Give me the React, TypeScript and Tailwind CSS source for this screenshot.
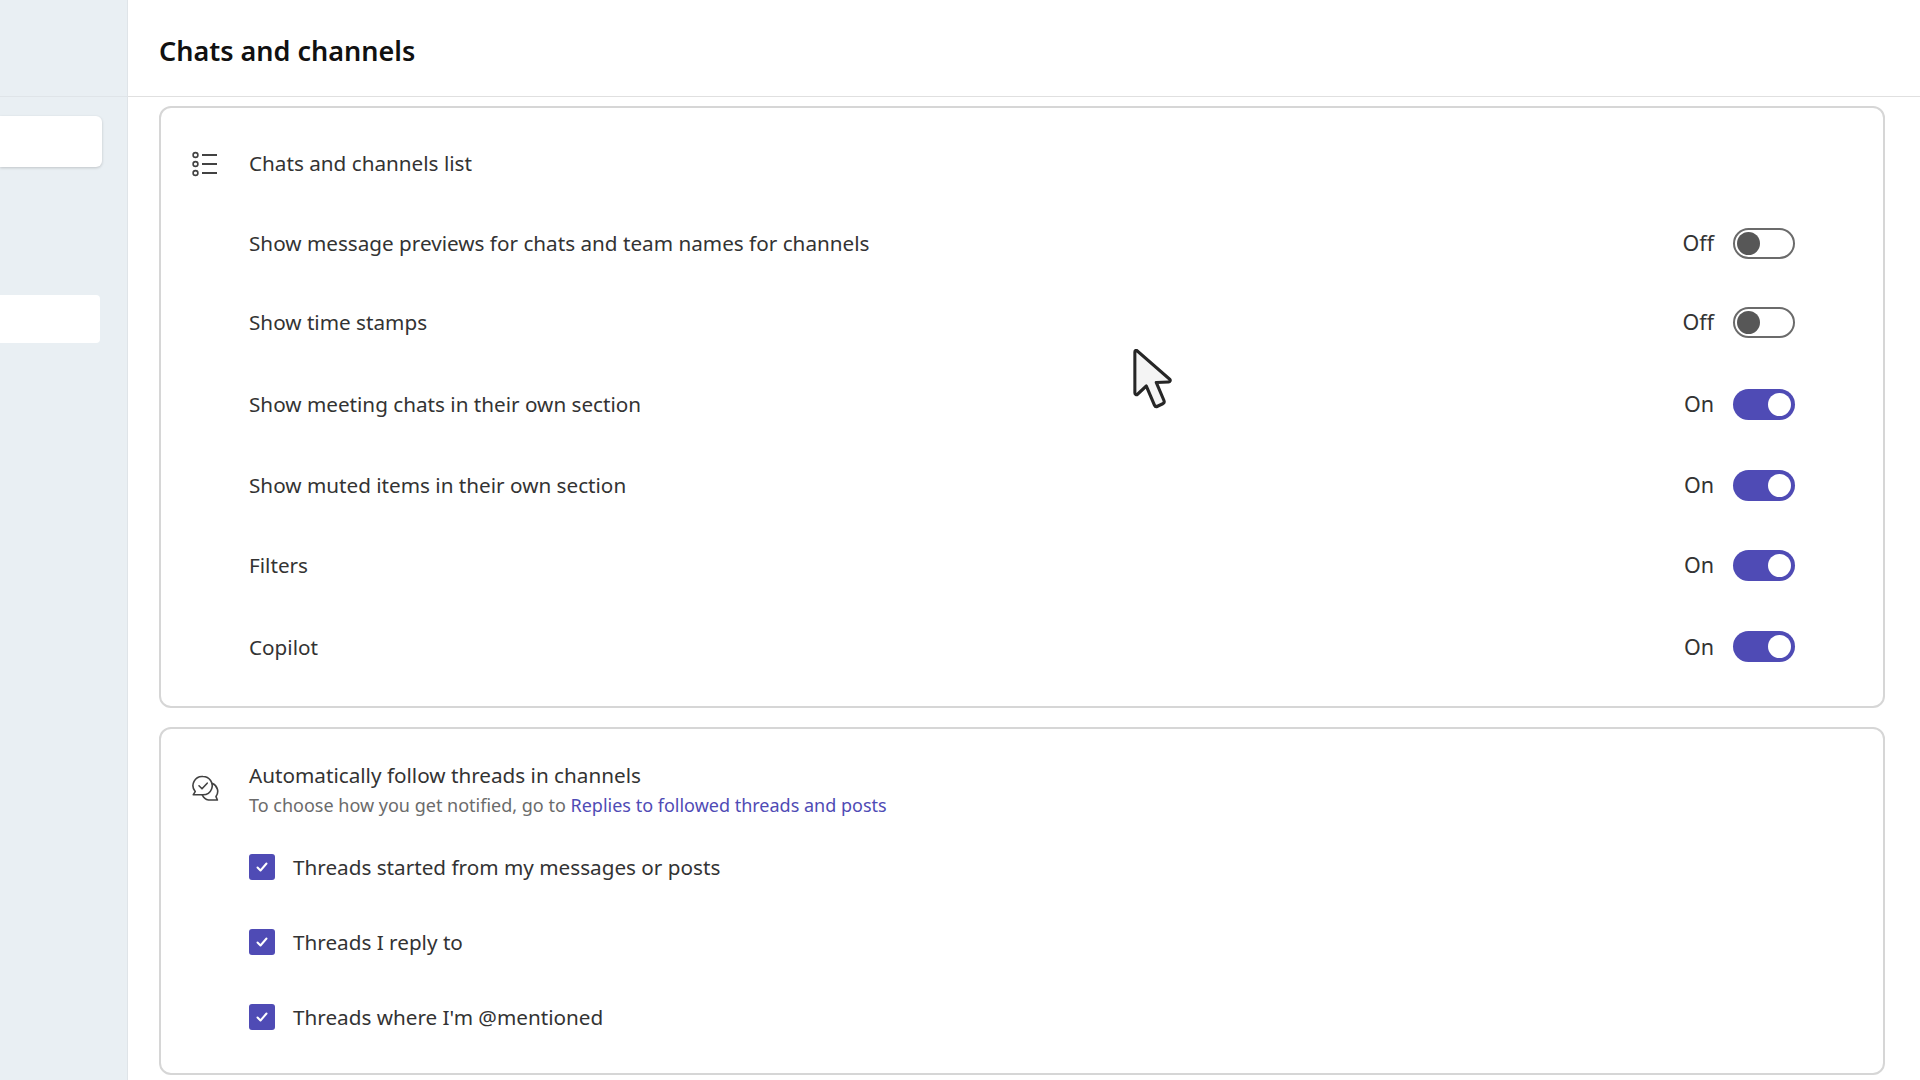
const font = "font-['Noto_Sans',sans-serif]";

const toggles = [
  { label: "Show message previews for chats and team names for channels", on: false, mt: "mt-[46px]" },
  { label: "Show time stamps", on: false, mt: "mt-[45px]" },
  { label: "Show meeting chats in their own section", on: true, mt: "mt-[48px]" },
  { label: "Show muted items in their own section", on: true, mt: "mt-[47px]" },
  { label: "Filters", on: true, mt: "mt-[46px]" },
  { label: "Copilot", on: true, mt: "mt-[47.500px]" },
];

const threads = [
  "Threads started from my messages or posts",
  "Threads I reply to",
  "Threads where I'm @mentioned",
];

function Toggle({ on }: { on: boolean }) {
  return (
    <div className="flex items-center gap-[19px]">
      <span className="w-[34px] text-right text-[21.500px] leading-[34px] text-[#333333]">{on ? "On" : "Off"}</span>
      <div
        className={
          on
            ? "flex h-[31px] w-[62px] items-center justify-end rounded-full bg-[#4f4bb5] px-[4px]"
            : "flex h-[31px] w-[62px] items-center justify-start rounded-full border-2 border-[#6b6b6b] bg-white px-[2px]"
        }
      >
        <div className={on ? "h-[23px] w-[23px] rounded-full bg-white" : "h-[23px] w-[23px] rounded-full bg-[#575757]"} />
      </div>
    </div>
  );
}

function ListIcon() {
  return (
    <svg className="mt-[2px]" width="28" height="28" viewBox="0 0 28 28" fill="none" stroke="#424242" strokeWidth="1.600">
      <circle cx="4.500" cy="5" r="2.400" />
      <circle cx="4.500" cy="14" r="2.400" />
      <circle cx="4.500" cy="23" r="2.400" />
      <path d="M11 5h15M11 14h15M11 23h15" strokeWidth="2" />
    </svg>
  );
}

function ThreadIcon() {
  return (
    <svg className="mb-[4px]" width="28" height="28" viewBox="0 0 28 28" fill="none" stroke="#424242" strokeWidth="1.600" strokeLinejoin="round" strokeLinecap="round">
      <path d="M12 2.500a9.200 9.200 0 0 1 8.600 12.500c-1.300 3.400-4.700 5.800-8.600 5.800H2.200l2-3.200A9.200 9.200 0 0 1 12 2.500Z" />
      <path d="M8 11.800l3 3 5.200-5.600" />
      <path d="M21.600 9.600a8.600 8.600 0 0 1 3.400 13l1.400 3.400h-8.800a8.600 8.600 0 0 1-6.200-4.900" />
    </svg>
  );
}

function Cursor() {
  return (
    <svg className="absolute left-[1132px] top-[349px]" width="40" height="60" viewBox="0 0 42 60" preserveAspectRatio="none">
      <path
        d="M3 3v41c0 1.500 1.700 2.200 2.800 1.200l9.200-8.200 8.500 19c.6 1.300 2 1.800 3.300 1.200l5.500-2.500c1.300-.6 1.800-2 1.200-3.300l-8-17.900 13-.5c1.500 0 2.200-1.800 1.100-2.800L5.600 1.900C4.500 1 3 1.600 3 3Z"
        fill="#f4f4f4"
        stroke="#262626"
        strokeWidth="3.200"
        strokeLinejoin="round"
      />
    </svg>
  );
}

export default function App() {
  return (
    <div className={`relative flex h-[1080px] w-[1920px] overflow-hidden bg-white ${font}`}>
      <aside className="w-[128px] shrink-0 border-r border-[#dfe4e8] bg-[#e9eff3]">
        <div className="h-[97px] border-b border-[#dfe4e8]" />
        <div className="mt-[19px] h-[51px] w-[102px] rounded-r-[6px] bg-white shadow-[0_1px_3px_rgba(0,0,0,0.18)]" />
        <div className="mt-[128px] h-[48px] w-[100px] rounded-r-[4px] bg-white" />
      </aside>
      <main className="min-w-0 flex-1">
        <header className="flex h-[97px] items-center border-b border-[#e0e0e0] pl-[31px] pt-[7px]">
          <h1 className="text-[27px] font-semibold text-[#111111]">Chats and channels</h1>
        </header>
        <div className="ml-[31px] mr-[35px] mt-[9px] flex flex-col gap-[19px]">
          <section className="h-[602px] rounded-[12px] border-2 border-[#d6d6d6] pl-[30px] pr-[88px] pt-[38px]">
            <div className="flex items-center gap-[30px]">
              <ListIcon />
              <h2 className="text-[20.700px] leading-[34px] text-[#333333]">Chats and channels list</h2>
            </div>
            {toggles.map((t) => (
              <div key={t.label} className={`flex items-center justify-between pl-[58px] ${t.mt}`}>
                <span className="text-[20.700px] leading-[34px] text-[#333333]">{t.label}</span>
                <Toggle on={t.on} />
              </div>
            ))}
          </section>
          <section className="h-[348px] rounded-[12px] border-2 border-[#d6d6d6] pl-[30px] pt-[31px]">
            <div className="flex items-center gap-[30px]">
              <ThreadIcon />
              <div>
                <h2 className="text-[20.700px] leading-[30px] text-[#333333]">Automatically follow threads in channels</h2>
                <p className="text-[18px] leading-[30px] text-[#6b6b6b]">
                  To choose how you get notified, go to <a className="text-[#4f4bb5]">Replies to followed threads and posts</a>
                </p>
              </div>
            </div>
            <ul className="ml-[58px] mt-[30px] flex flex-col gap-[41px]">
              {threads.map((t) => (
                <li key={t} className="flex items-center gap-[18px]">
                  <div className="flex h-[26px] w-[26px] items-center justify-center rounded-[3px] bg-[#4f4bb5]">
                    <svg width="14" height="14" viewBox="0 0 14 14" fill="none" stroke="white" strokeWidth="2" strokeLinecap="round" strokeLinejoin="round">
                      <path d="M2.500 7.500l3 3 6-7" />
                    </svg>
                  </div>
                  <span className="text-[20.700px] leading-[34px] text-[#333333]">{t}</span>
                </li>
              ))}
            </ul>
          </section>
        </div>
      </main>
      <Cursor />
    </div>
  );
}
